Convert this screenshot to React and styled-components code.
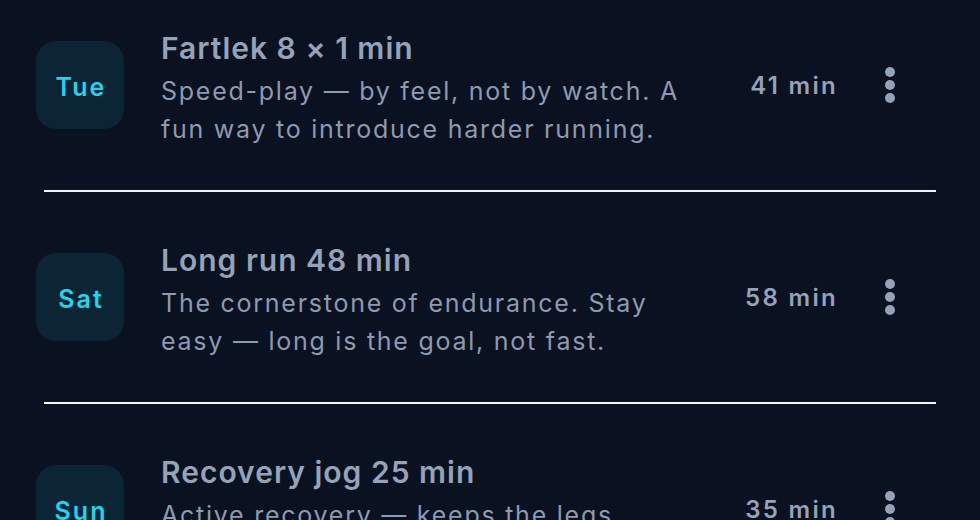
import React from 'react';
import styled, { createGlobalStyle } from 'styled-components';

const GlobalStyle = createGlobalStyle`
	html, body {
		margin: 0;
		padding: 0;
		background: #0a1120;
	}
	body {
		font-family: Inter, 'Noto Sans', 'Liberation Sans', sans-serif;
		-webkit-font-smoothing: antialiased;
	}
`;

const Page = styled.div`
	width: 980px;
	height: 520px;
	overflow: hidden;
	background: #0a1120;
`;

// list is scrolled a little, first row starts above the fold
const List = styled.ul`
	list-style: none;
	margin: -20px 0 0;
	padding: 0;
`;

const Item = styled.li`
	display: flex;
	flex-direction: column;
`;

const Row = styled.div`
	height: 210px;
	display: flex;
	align-items: center;
	padding: 0 78px 0 36px;
	box-sizing: border-box;
`;

const DayBadge = styled.div`
	flex: 0 0 88px;
	height: 88px;
	border-radius: 20px;
	background: rgba(34, 211, 238, 0.1);
	display: flex;
	align-items: center;
	justify-content: center;
	color: #22d3ee;
	font-size: 25px;
	font-weight: 600;
	letter-spacing: 2px;
	padding: 3px 0 0 2px;
	box-sizing: border-box;
`;

const Body = styled.div`
	flex: 1;
	min-width: 0;
	margin: 0 36px 0 37px;
	padding-top: 7px;
	display: flex;
	flex-direction: column;
	gap: 6px;
`;

const Title = styled.div`
	font-size: 30px;
	font-weight: 600;
	line-height: 36px;
	letter-spacing: 1px;
	color: #94a3b8;
`;

const Desc = styled.div`
	font-size: 25px;
	line-height: 38px;
	letter-spacing: 1.75px;
	color: #8d9ab0;
`;

const Duration = styled.div`
	flex: 0 0 100px;
	text-align: right;
	font-size: 24px;
	font-weight: 600;
	letter-spacing: 2.3px;
	margin-right: -4px;
	color: #94a3b8;
`;

const MenuButton = styled.button`
	flex: 0 0 24px;
	height: 40px;
	margin-left: 44px;
	padding: 0;
	border: 0;
	background: transparent;
	display: flex;
	align-items: center;
	justify-content: center;
	color: #94a3b8;
`;

const Divider = styled.hr`
	margin: 0 44px;
	border: 0;
	height: 2px;
	background: #f1f5f9;
`;

const DotsIcon = () => (
	<svg width='12' height='38' viewBox='0 0 12 38'>
		<circle cx='6' cy='6' r='5' fill='currentColor' />
		<circle cx='6' cy='19' r='5' fill='currentColor' />
		<circle cx='6' cy='32' r='5' fill='currentColor' />
	</svg>
);

const workouts = [
	{
		day: 'Tue',
		title: 'Fartlek 8 × 1 min',
		desc: 'Speed-play — by feel, not by watch. A fun way to introduce harder running.',
		duration: '41 min'
	},
	{
		day: 'Sat',
		title: 'Long run 48 min',
		desc: 'The cornerstone of endurance. Stay easy — long is the goal, not fast.',
		duration: '58 min'
	},
	{
		day: 'Sun',
		title: 'Recovery jog 25 min',
		desc: 'Active recovery — keeps the legs moving without adding fatigue.',
		duration: '35 min'
	}
];

const App = () => {
	return (
		<Page>
			<GlobalStyle />
			<List>
				{workouts.map((w, i) => (
					<Item key={w.day}>
						<Row>
							<DayBadge>{w.day}</DayBadge>
							<Body>
								<Title>{w.title}</Title>
								<Desc>{w.desc}</Desc>
							</Body>
							<Duration>{w.duration}</Duration>
							<MenuButton aria-label='More'>
								<DotsIcon />
							</MenuButton>
						</Row>
						{i < workouts.length - 1 && <Divider />}
					</Item>
				))}
			</List>
		</Page>
	);
};

export default App;
